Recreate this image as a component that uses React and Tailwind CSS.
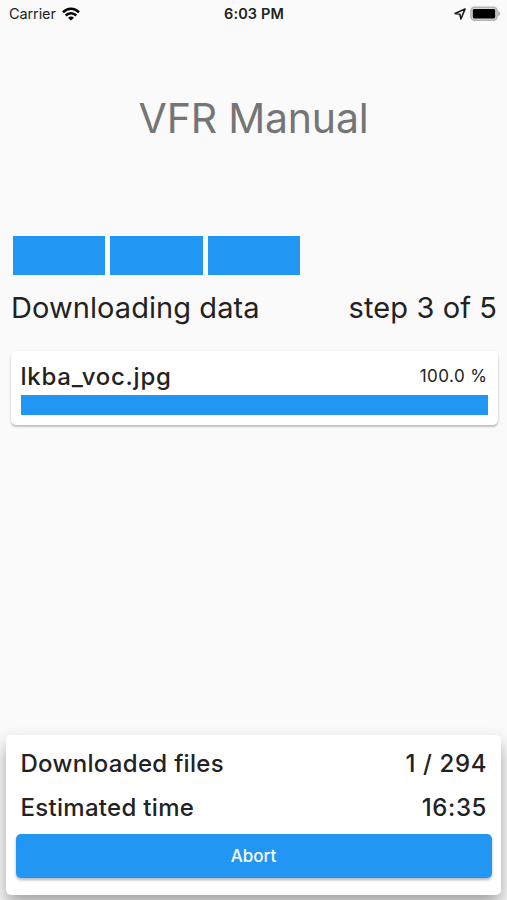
const steps = [1, 2, 3];

const WifiIcon = () => (
  <svg width="18" height="14" viewBox="0 0 18 14" fill="none" stroke="#000" strokeWidth="2.5">
    <path d="M1 5.3C5.6 0.7 12.4 0.7 17 5.3" />
    <path d="M3.7 8.5C6.7 5.6 11.3 5.6 14.3 8.5" />
    <path d="M6 10.7C7.7 9.1 10.3 9.1 12 10.7L9 13.6Z" fill="#000" stroke="none" />
  </svg>
);

const LocationIcon = () => (
  <svg width="12" height="12" viewBox="0 0 12 12" fill="none" stroke="#1a1a1a" strokeWidth="1.6" strokeLinejoin="round">
    <path d="M11 1.1L1 5.5L5.9 6.2L6.9 11Z" />
  </svg>
);

const BatteryIcon = () => (
  <svg width="31" height="16" viewBox="0 0 31 16">
    <rect x="0.9" y="1.2" width="26.2" height="13" rx="3.6" fill="#d8d8d8" stroke="#b4b4b4" strokeWidth="1.5" />
    <rect x="2.8" y="3" width="22.4" height="9.4" rx="1.4" fill="#000" />
    <path d="M28.1 5.1C31 6.3 31 9.1 28.1 10.3Z" fill="#b4b4b4" />
  </svg>
);

const StatusBar = () => (
  <div className="grid h-7 grid-cols-3 items-center px-[9px] text-sm text-[#222]">
    <div className="flex items-center gap-[6px]">
      <span className="text-[14.5px] tracking-[-0.1px]">Carrier</span>
      <WifiIcon />
    </div>
    <span className="pl-[1px] text-center text-[14.5px] font-semibold tracking-[0.1px]">6:03 PM</span>
    <div className="-mr-[3px] flex items-center justify-end gap-1">
      <LocationIcon />
      <BatteryIcon />
    </div>
  </div>
);

const InfoRow = ({ label, value }) => (
  <div className="flex h-11 items-center justify-between px-[5px] text-[24px] font-medium">
    <span className="tracking-[0.3px]">{label}</span>
    <span className="-mr-[0.5px] tracking-[0.6px]">{value}</span>
  </div>
);

const App = () => {
  return (
    <div className="flex h-[900px] w-[507px] flex-col overflow-hidden bg-[#fafafa] font-['Inter',sans-serif] text-[#222]">
      <StatusBar />

      <h1 className="mt-[60px] h-[60px] text-center text-[41px] leading-[60px] tracking-[-0.2px] text-[#757575]">
        VFR Manual
      </h1>

      <div className="mt-[87.5px] flex gap-[5px] pl-[13px]">
        {steps.map((step) => (
          <div key={step} className="h-[39px] w-[92.4px] bg-[#2196f3]" />
        ))}
      </div>

      <div className="mt-[13.5px] flex h-10 items-center justify-between pr-[10px] pl-[11px] text-[29px]">
        <span className="tracking-[0.07px]">Downloading data</span>
        <span className="tracking-[0.1px]">step 3 of 5</span>
      </div>

      <div className="mr-[9.5px] ml-[10.5px] mt-[23px] h-[74px] rounded-[5px] bg-white px-[10px] pt-[9px] shadow-[0_2px_2px_rgba(0,0,0,0.18),0_1px_3px_rgba(0,0,0,0.1)]">
        <div className="flex h-[35px] items-center justify-between pb-[2px]">
          <span className="text-[24px] font-medium tracking-[0.75px]">lkba_voc.jpg</span>
          <span className="text-[17px] tracking-[0.45px]">100.0 %</span>
        </div>
        <div className="h-5 bg-[#2196f3]" />
      </div>

      <div className="mx-[6px] mt-auto mb-[5px] h-[160px] rounded-[5px] bg-white px-[9.5px] pt-[7px] shadow-[0_10px_18px_rgba(0,0,0,0.35)]">
        <InfoRow label="Downloaded files" value="1 / 294" />
        <InfoRow label="Estimated time" value="16:35" />
        <button className="mt-[4px] h-[44px] w-full rounded-[5px] bg-[#2196f3] pt-[1px] text-[17px] font-medium text-white shadow-[0_2px_3px_rgba(0,0,0,0.3)]">
          Abort
        </button>
      </div>
    </div>
  );
};

export default App;
